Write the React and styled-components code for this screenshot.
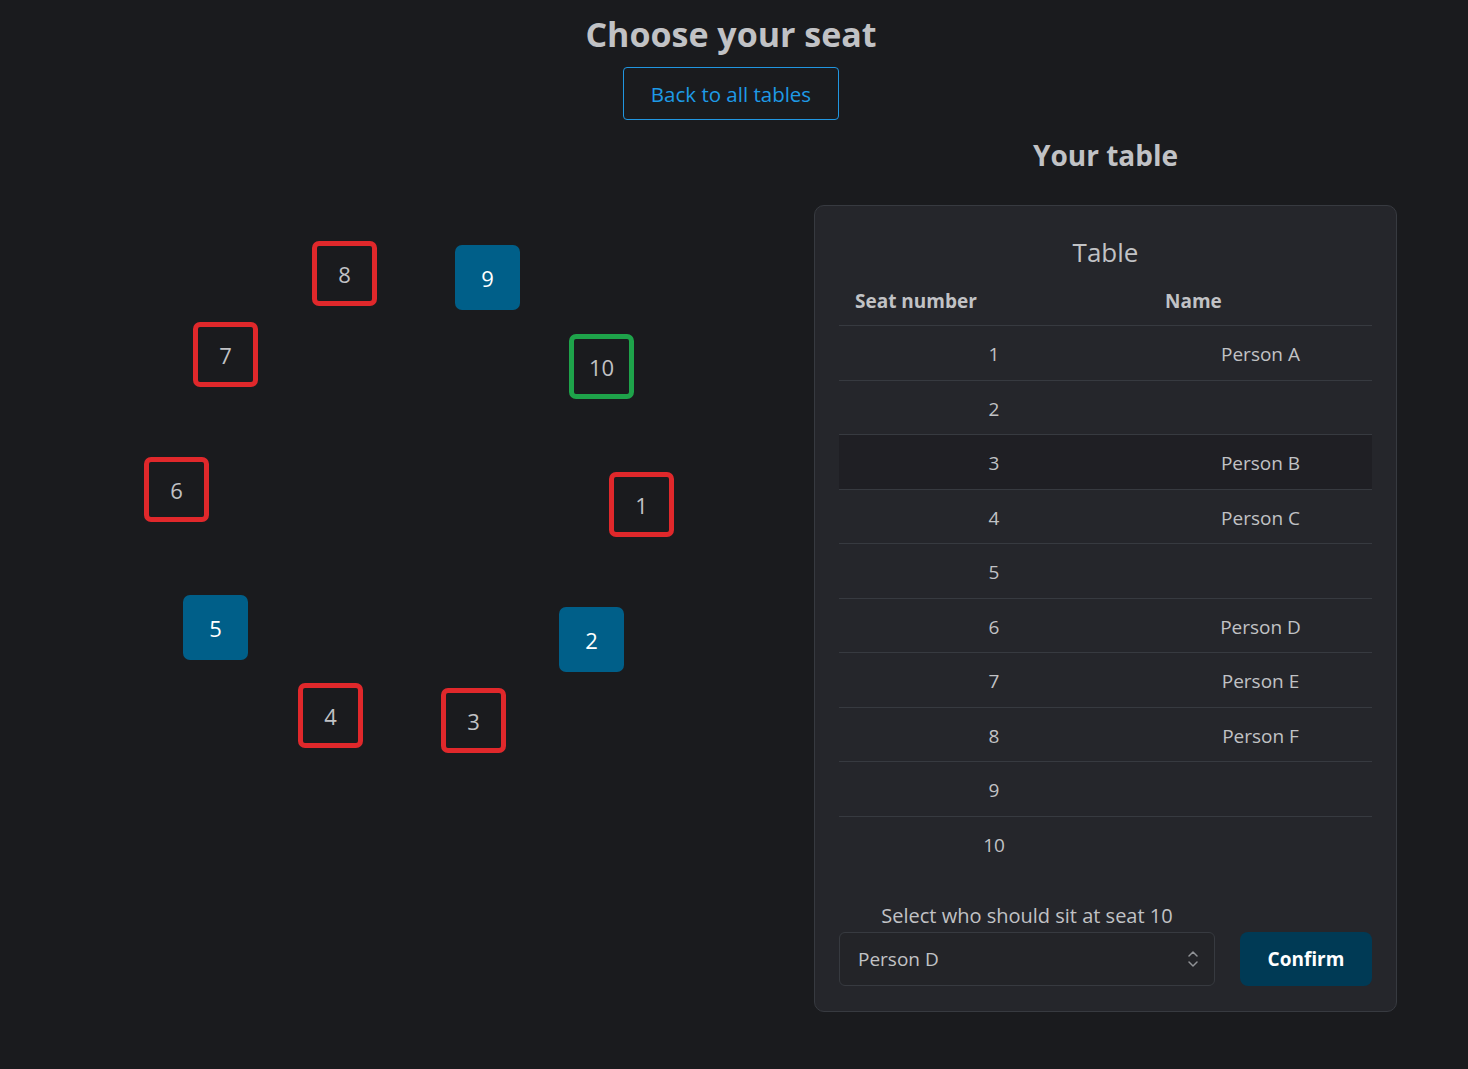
import React from "react";
import styled, { createGlobalStyle } from "styled-components";

const GlobalStyle = createGlobalStyle`
  * { box-sizing: border-box; }
  body {
    margin: 0;
    background: #1a1b1e;
    color: #c1c2c5;
    font-family: "Open Sans", "Noto Sans", "Liberation Sans", sans-serif;
  }
`;

const Page = styled.div`
  min-height: 100vh;
  padding-top: 12px;
`;

const Header = styled.header`
  display: flex;
  flex-direction: column;
  align-items: center;
  padding-right: 6px;
`;

const Title = styled.h1`
  margin: 0;
  font-size: 34px;
  line-height: 44px;
  font-weight: 700;
  color: #c1c2c5;
`;

const OutlineButton = styled.button`
  margin-top: 11px;
  height: 53px;
  width: 216px;
  background: transparent;
  border: 1px solid #2196e0;
  border-radius: 4px;
  color: #1e9ae6;
  font-family: inherit;
  font-size: 20.5px;
  cursor: pointer;
`;

const Main = styled.main`
  display: flex;
  align-items: flex-start;
`;

const Canvas = styled.div`
  position: relative;
  flex: 0 0 814px;
  height: 700px;
`;

const SeatBox = styled.div`
  position: absolute;
  width: 65px;
  height: 65px;
  border-radius: 7px;
  display: flex;
  align-items: center;
  justify-content: center;
  font-size: 22px;
  color: ${(p) => (p.$state === "taken" ? "#ffffff" : "#c1c2c5")};
  background: ${(p) => (p.$state === "taken" ? "#005f89" : "transparent")};
  border: ${(p) =>
    p.$state === "taken"
      ? "none"
      : p.$state === "selected"
      ? "5px solid #1ea34a"
      : "5px solid #e0282b"};
`;

const RightColumn = styled.section`
  flex: 0 0 583px;
  display: flex;
  flex-direction: column;
`;

const SubTitle = styled.h2`
  margin: 15px 0 30px;
  text-align: center;
  font-size: 28px;
  line-height: 40px;
  font-weight: 700;
  color: #c1c2c5;
`;

const Card = styled.div`
  background: #25262b;
  border: 1px solid #373a40;
  border-radius: 10px;
  padding: 28px 24px 25px;
`;

const Table = styled.table`
  width: 100%;
  border-collapse: collapse;
  font-size: 19px;
`;

const Caption = styled.caption`
  font-size: 26px;
  line-height: 36px;
  padding-bottom: 17px;
  color: #c1c2c5;
`;

const Th = styled.th`
  text-align: left;
  font-weight: 700;
  padding: 0 16px 10px;
  line-height: 28px;
  width: ${(p) => p.$w || "auto"};
  border-bottom: 1px solid #373a40;
`;

const Tr = styled.tr`
  background: ${(p) => (p.$active ? "#1f1f24" : "transparent")};
  border-bottom: ${(p) => (p.$last ? "none" : "1px solid #373a40")};
`;

const Td = styled.td`
  text-align: center;
  padding: 15px 16px 11.5px;
  line-height: 27px;
`;

const Form = styled.div`
  display: flex;
  align-items: flex-end;
  gap: 25px;
  margin-top: 32px;
`;

const Field = styled.div`
  flex: 1;
  display: flex;
  flex-direction: column;
  align-items: center;
`;

const Label = styled.label`
  font-size: 20px;
  line-height: 28px;
  margin-bottom: 2px;
`;

const SelectBox = styled.div`
  width: 100%;
  height: 54px;
  border: 1px solid #373a40;
  border-radius: 6px;
  background: #232428;
  display: flex;
  align-items: center;
  justify-content: space-between;
  padding: 0 14px 0 18px;
  font-size: 19px;
`;

const ConfirmButton = styled.button`
  flex: 0 0 132px;
  height: 54px;
  border: none;
  border-radius: 8px;
  background: #003a55;
  color: #ffffff;
  font-family: inherit;
  font-weight: 700;
  font-size: 19px;
  cursor: pointer;
`;

const seats = [
  { n: 1, x: 609, y: 352, s: "free" },
  { n: 2, x: 559, y: 487, s: "taken" },
  { n: 3, x: 441, y: 568, s: "free" },
  { n: 4, x: 298, y: 563, s: "free" },
  { n: 5, x: 183, y: 475, s: "taken" },
  { n: 6, x: 144, y: 337, s: "free" },
  { n: 7, x: 193, y: 202, s: "free" },
  { n: 8, x: 312, y: 121, s: "free" },
  { n: 9, x: 455, y: 125, s: "taken" },
  { n: 10, x: 569, y: 214, s: "selected" },
];

const rows = [
  ["1", "Person A"],
  ["2", ""],
  ["3", "Person B"],
  ["4", "Person C"],
  ["5", ""],
  ["6", "Person D"],
  ["7", "Person E"],
  ["8", "Person F"],
  ["9", ""],
  ["10", ""],
];

const Chevrons = () => (
  <svg width="14" height="20" viewBox="0 0 14 20" fill="none" stroke="#909296" strokeWidth="1.5" strokeLinecap="round" strokeLinejoin="round">
    <path d="M3 7 L7 3 L11 7" />
    <path d="M3 13 L7 17 L11 13" />
  </svg>
);

export default function App() {
  return (
    <Page>
      <GlobalStyle />
      <Header>
        <Title>Choose your seat</Title>
        <OutlineButton>Back to all tables</OutlineButton>
      </Header>
      <Main>
        <Canvas>
          {seats.map((seat) => (
            <SeatBox key={seat.n} $state={seat.s} style={{ left: seat.x, top: seat.y }}>
              {seat.n}
            </SeatBox>
          ))}
        </Canvas>
        <RightColumn>
          <SubTitle>Your table</SubTitle>
          <Card>
            <Table>
              <Caption>Table</Caption>
              <thead>
                <tr>
                  <Th $w="310px">Seat number</Th>
                  <Th>Name</Th>
                </tr>
              </thead>
              <tbody>
                {rows.map(([n, name], i) => (
                  <Tr key={n} $active={n === "3"} $last={i === rows.length - 1}>
                    <Td>{n}</Td>
                    <Td>{name}</Td>
                  </Tr>
                ))}
              </tbody>
            </Table>
            <Form>
              <Field>
                <Label>Select who should sit at seat 10</Label>
                <SelectBox>
                  <span>Person D</span>
                  <Chevrons />
                </SelectBox>
              </Field>
              <ConfirmButton>Confirm</ConfirmButton>
            </Form>
          </Card>
        </RightColumn>
      </Main>
    </Page>
  );
}
